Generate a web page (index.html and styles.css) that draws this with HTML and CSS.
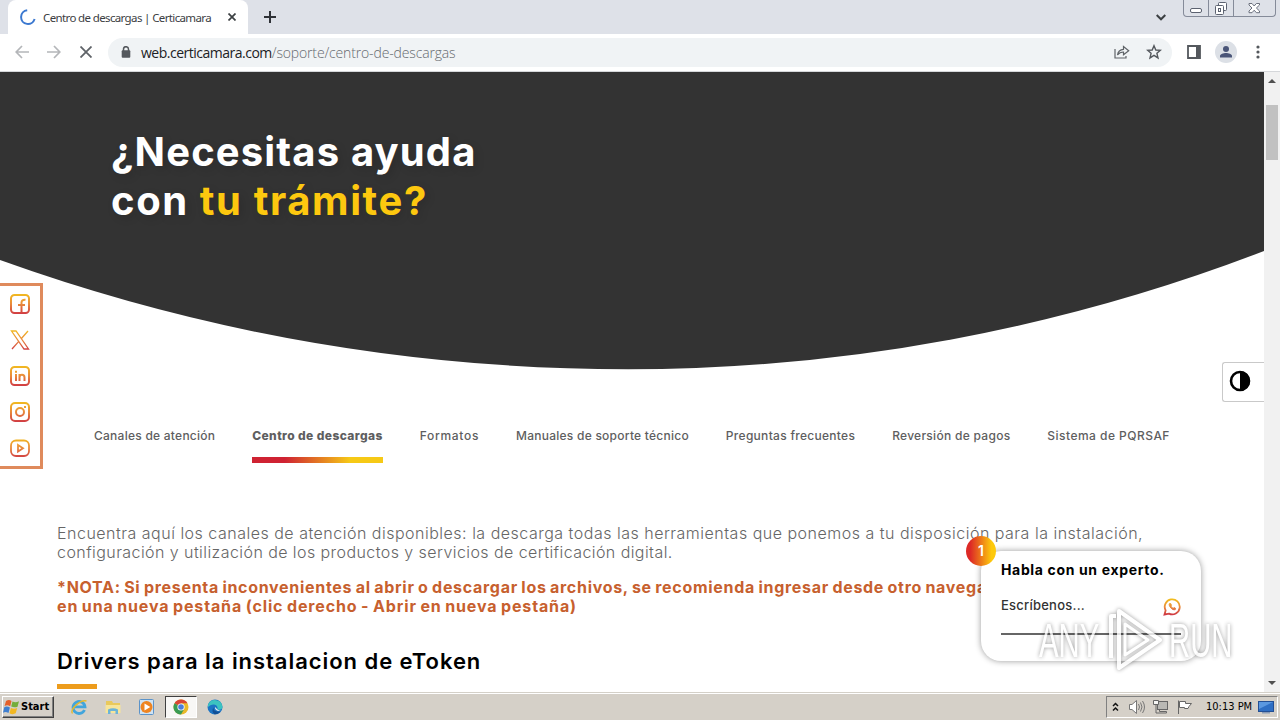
FILE: index.html
```html
<!DOCTYPE html>
<html lang="es">

<head>
    <meta charset="utf-8">
    <title>Centro de descargas | Certicamara</title>
    <link rel="stylesheet" href="styles.css">
</head>

<body>
    <svg class="defs" width="0" height="0">
        <defs>
            <linearGradient id="warm" x1="0" y1="0" x2="0" y2="24" gradientUnits="userSpaceOnUse">
                <stop offset="0" stop-color="#f3c41a" />
                <stop offset="0.5" stop-color="#e98a3c" />
                <stop offset="1" stop-color="#cb2b45" />
            </linearGradient>
        </defs>
    </svg>

    <header class="tabstrip">
        <div class="tab">
            <svg class="spinner" width="16" height="16" viewBox="0 0 16 16" fill="none" stroke="#3b78d0" stroke-width="2">
                <path d="M7.2 1.2A6.9 6.9 0 1 0 14.6 10" />
            </svg>
            <span class="tab-title">Centro de descargas | Certicamara</span>
            <svg class="tab-close" width="8" height="8" viewBox="0 0 8 8" stroke="#3c4043" stroke-width="1.7">
                <path d="M0.5 0.5L7.5 7.5M7.5 0.5L0.5 7.5" />
            </svg>
        </div>
        <svg class="new-tab" width="12" height="12" viewBox="0 0 12 12" stroke="#2f3237" stroke-width="2">
            <path d="M6 0V12M0 6H12" />
        </svg>
        <svg class="tab-search" width="10" height="7" viewBox="0 0 10 7" fill="none" stroke="#3c4043" stroke-width="2">
            <path d="M0.7 1L5 5.3L9.3 1" />
        </svg>
        <div class="win-buttons">
            <span>
                <svg width="13" height="17" viewBox="0 0 13 17" fill="#fff" stroke="#5c6270">
                    <rect x="0.5" y="8.5" width="11" height="4" rx="1.5" />
                </svg>
            </span>
            <span>
                <svg width="14" height="17" viewBox="0 0 14 17" fill="#fff" stroke="#5c6270">
                    <rect x="4.5" y="2.5" width="8" height="8" rx="1" />
                    <rect x="1.5" y="5.5" width="8" height="9" rx="1" />
                    <rect x="4.5" y="8.5" width="2" height="3" />
                </svg>
            </span>
            <span>
                <svg width="13" height="17" viewBox="0 0 13 17" fill="#fff" stroke="#5c6270" stroke-width="0.9">
                    <path d="M1 3.5H4L6.2 6L8.4 3.5H11.5V5L8.4 8L11.5 11V12.7H8.4L6.2 10.2L4 12.7H1V11L4 8L1 5Z" />
                </svg>
            </span>
        </div>
    </header>

    <div class="toolbar">
        <svg class="nav-icon" width="14" height="14" viewBox="0 0 14 14" fill="none" stroke="#b4b6b9" stroke-width="1.7">
            <path d="M14 7H1.5M7 1L1.2 7L7 13" />
        </svg>
        <svg class="nav-icon" width="14" height="14" viewBox="0 0 14 14" fill="none" stroke="#b4b6b9" stroke-width="1.7">
            <path d="M0 7H12.5M7 1L12.8 7L7 13" />
        </svg>
        <svg class="nav-icon stop" width="12" height="12" viewBox="0 0 12 12" stroke="#5f6368" stroke-width="1.8">
            <path d="M0.5 0.5L11.5 11.5M11.5 0.5L0.5 11.5" />
        </svg>
        <div class="omnibox">
            <svg class="lock" width="10" height="12" viewBox="0 0 10 12">
                <path d="M2.5 5V3.2A2.5 2.5 0 0 1 7.5 3.2V5" fill="none" stroke="#54585d" stroke-width="1.5" />
                <rect x="0.7" y="4.3" width="8.6" height="7.5" rx="1" fill="#54585d" />
            </svg>
            <span class="url"><b>web.certicamara.com</b>/soporte/centro-de-descargas</span>
            <svg class="share" width="16" height="14" viewBox="0 0 16 14" fill="none" stroke="#5f6368" stroke-width="1.2">
                <path d="M1 4V13H12V11M3.5 10C4 6.5 6 4.5 9.5 4.3V1.5L14.7 5.7L9.5 9.8V7C7 7 5 8 3.5 10Z" />
            </svg>
            <svg class="star" width="16" height="16" viewBox="0 0 16 16" fill="none" stroke="#54585d" stroke-width="1.4">
                <path d="M8 1.7L9.8 6L14.4 6.3L10.9 9.3L12 13.9L8 11.4L4 13.9L5.1 9.3L1.6 6.3L6.2 6Z" />
            </svg>
        </div>
        <svg class="panel" width="14" height="14" viewBox="0 0 14 14">
            <path d="M1 1H13V13H1Z" fill="none" stroke="#54585d" stroke-width="1.8" />
            <rect x="9" y="1" width="4" height="12" fill="#54585d" />
        </svg>
        <div class="avatar">
            <svg width="14" height="14" viewBox="0 0 14 14" fill="#4a5578">
                <circle cx="7" cy="4" r="3" />
                <path d="M1 12.5V11C1 9 4.5 8 7 8S13 9 13 11V12.5Z" />
            </svg>
        </div>
        <svg class="kebab" width="4" height="14" viewBox="0 0 4 14" fill="#54585d">
            <circle cx="2" cy="2" r="1.6" />
            <circle cx="2" cy="7" r="1.6" />
            <circle cx="2" cy="12" r="1.6" />
        </svg>
    </div>

    <div class="viewport">
        <main class="page">
            <section class="hero">
                <svg class="hero-bg" width="1264" height="298" viewBox="0 0 1264 298">
                    <path d="M0 0H1264V179A1773 1773 0 0 1 628 297.3A1859 1859 0 0 1 0 188Z" fill="#333" />
                </svg>
                <h1>
                    <span class="t1">¿Necesitas ayuda</span><br>
                    <span class="t2">con <em>tu trámite?</em></span>
                </h1>
            </section>

            <nav class="sections">
                <a class="n1">Canales de atención</a>
                <a class="n2 current">Centro de descargas</a>
                <a class="n3">Formatos</a>
                <a class="n4">Manuales de soporte técnico</a>
                <a class="n5">Preguntas frecuentes</a>
                <a class="n6">Reversión de pagos</a>
                <a class="n7">Sistema de PQRSAF</a>
            </nav>

            <section class="content">
                <p class="lead">
                    <span class="l1">Encuentra aquí los canales de atención disponibles: la descarga todas las herramientas que ponemos a tu disposición para la instalación,</span><br>
                    <span class="l2">configuración y utilización de los productos y servicios de certificación digital.</span>
                </p>
                <p class="note">
                    <span class="o1">*NOTA: Si presenta inconvenientes al abrir o descargar los archivos, se recomienda ingresar desde otro navegador</span><br>
                    <span class="o2">en una nueva pestaña (clic derecho - Abrir en nueva pestaña)</span>
                </p>
                <h2>Drivers para la instalacion de eToken</h2>
            </section>

            <aside class="social">
                <svg width="24" height="24" viewBox="0 0 24 24" fill="none" stroke="url(#warm)" stroke-width="2">
                    <rect x="3" y="3" width="18" height="18" rx="3.5" />
                    <path d="M13.5 21V10.5Q13.5 7.5 17.5 7.8M10 13H17" />
                </svg>
                <svg width="24" height="24" viewBox="0 0 24 24" fill="none" stroke="url(#warm)" stroke-width="1.3">
                    <path d="M3.5 3H8L20.5 21H16ZM20 3L13.2 10.7M10.8 13.4L4 21" />
                </svg>
                <svg width="24" height="24" viewBox="0 0 24 24" fill="none" stroke="url(#warm)" stroke-width="2">
                    <rect x="3" y="3" width="18" height="18" rx="3.5" />
                    <path d="M8 10V17M8 6.8V8.8M11.5 17V10M11.5 13Q11.8 10.8 14 10.8Q16.5 10.8 16.5 13.5V17" />
                </svg>
                <svg width="24" height="24" viewBox="0 0 24 24" fill="none" stroke="url(#warm)" stroke-width="2">
                    <rect x="3" y="3" width="18" height="18" rx="4" />
                    <circle cx="12" cy="12" r="4" />
                    <path d="M16 7H18" />
                </svg>
                <svg width="24" height="24" viewBox="0 0 24 24" fill="none" stroke="url(#warm)" stroke-width="1.8">
                    <rect x="3" y="4.5" width="18" height="15.5" rx="5" />
                    <path d="M10 9L15 12.2L10 15.5Z" />
                </svg>
            </aside>

            <div class="contrast">
                <svg width="22" height="22" viewBox="0 0 22 22">
                    <circle cx="11" cy="11" r="9" fill="#fff" stroke="#000" stroke-width="2.6" />
                    <path d="M11 1A10 10 0 0 1 11 21Z" />
                </svg>
            </div>

            <div class="chat">
                <span class="badge">1</span>
                <strong>Habla con un experto.</strong>
                <div class="chat-input">
                    <span>Escríbenos...</span>
                    <svg width="18" height="18" viewBox="0 0 24 24" fill="none" stroke="url(#warm)" stroke-width="2.4">
                        <path d="M2 22L3.5 16.5A10 10 0 1 1 8 20.8Z" />
                        <path d="M8.5 7.5C7 10.5 12.5 17 16.3 15.5L16.8 13.8L14.6 12.7L13.5 13.8C12 13.2 11 12 10.5 10.7L11.3 9.6L10.2 7.3Z" stroke-width="1.3" fill="url(#warm)" />
                    </svg>
                </div>
            </div>

            <div class="watermark">
                <span>ANY</span>
                <svg width="56" height="64" viewBox="0 0 56 64" fill="none" stroke="#fff" stroke-linejoin="round">
                    <path d="M3 50V8H8" stroke-width="4" />
                    <path d="M11 3L52 32L11 60Z" stroke-width="4" />
                    <path d="M17 16L40 32L17 47Z" stroke-width="3" />
                </svg>
                <span>RUN</span>
            </div>
        </main>

        <div class="scrollbar">
            <i class="arrow up"></i>
            <i class="thumb"></i>
            <i class="arrow down"></i>
        </div>
    </div>

    <footer class="taskbar">
        <div class="start">
            <svg width="17" height="16" viewBox="0 0 17 16">
                <path d="M3 2Q6 0 8.5 2L7.2 7.3Q4.5 5.5 1.6 7Z" fill="#e5602a" />
                <path d="M9.5 2.5Q12.5 4 16 2.3L14.5 7.8Q11.5 9 8.2 7.6Z" fill="#74ad3c" />
                <path d="M1.3 8.2Q4 6.8 6.9 8.6L5.5 14Q2.7 12.2 0 13.7Z" fill="#3f7fd0" />
                <path d="M7.9 9Q11 10.3 14.2 9L12.7 14.3Q9.5 16 6.5 14.2Z" fill="#f2b822" />
            </svg>
            <span>Start</span>
        </div>
        <div class="launch">
            <svg width="18" height="18" viewBox="0 0 18 18" fill="none">
                <path d="M14.5 12A6 6 0 1 1 15 8.8H4" stroke="#42a5dc" stroke-width="2.8" />
                <path d="M2.5 15.5C-1 12 10 1.5 16.5 3" stroke="#e5b92d" stroke-width="1.4" />
            </svg>
        </div>
        <div class="launch">
            <svg width="18" height="18" viewBox="0 0 18 18">
                <path d="M2 3H8L9 5H16V15H2Z" fill="#e9c95c" />
                <path d="M1.5 7H16.5V15H1.5Z" fill="#f7e59a" />
                <path d="M4 16V11.5Q9 9 14 11.5V16H11.5V13H6.5V16Z" fill="#6cb4d8" />
            </svg>
        </div>
        <div class="launch">
            <svg width="18" height="18" viewBox="0 0 18 18">
                <rect x="1.5" y="1.5" width="14" height="15" rx="1" fill="#cfe3f3" stroke="#5b93c9" />
                <circle cx="8.5" cy="9" r="6" fill="#ee8420" />
                <path d="M6.5 5.5L12.3 9L6.5 12.5Z" fill="#fff" />
            </svg>
        </div>
        <div class="launch active">
            <svg width="16" height="16" viewBox="0 0 16 16">
                <circle cx="8" cy="8" r="7.5" fill="#e9b92a" />
                <path d="M8 8L1.5 4.25A7.5 7.5 0 0 1 14.5 4.25H8Z" fill="#d94535" />
                <path d="M1.5 4.25A7.5 7.5 0 0 0 8 15.5L11.2 10Z" fill="#3a9b53" />
                <circle cx="8" cy="8" r="3.6" fill="#fff" />
                <circle cx="8" cy="8" r="2.8" fill="#4a7ddb" />
            </svg>
        </div>
        <div class="launch">
            <svg width="16" height="16" viewBox="0 0 16 16">
                <circle cx="8" cy="8" r="7.5" fill="#1c74c4" />
                <path d="M1 6A7.5 7.5 0 0 1 15.5 8Q15 11.5 10.5 10.5Q11 6 7 5.5Q3.5 5 1 8Z" fill="#3cc3c0" />
                <path d="M6.5 8.5Q6 13 13.5 12.8Q10.5 15.5 7.5 15.3Q4 12.5 6.5 8.5Z" fill="#124f95" />
                <path d="M8 8Q7.5 10.5 11 12L14.8 11Q11.5 11.8 10 10Z" fill="#e6eef2" />
            </svg>
        </div>
        <div class="tray">
            <svg class="chevrons" width="7" height="10" viewBox="0 0 7 10" fill="none" stroke="#111" stroke-width="1.5">
                <path d="M1 4L3.5 1.5L6 4M1 8.5L3.5 6L6 8.5" />
            </svg>
            <svg width="18" height="16" viewBox="0 0 18 16" fill="#fff" stroke="#777" stroke-width="1">
                <path d="M1.5 5.5H4L8.5 1.5V14.5L4 10.5H1.5Z" />
                <path d="M10.5 5Q12.5 8 10.5 11M12.5 3.5Q15.5 8 12.5 12.5M14.5 2Q18.5 8 14.5 14" fill="none" />
            </svg>
            <svg width="18" height="16" viewBox="0 0 18 16" fill="#f6f6f4" stroke="#666">
                <rect x="5.5" y="2.5" width="10" height="8" fill="#b9b8b4" />
                <path d="M1.5 1.5V5.5H6.5V1.5Z" />
                <path d="M4 5.5V14H14.500V12.500H7.500V10.500" fill="none" />
            </svg>
            <svg width="18" height="16" viewBox="0 0 18 16" fill="#fff" stroke="#666">
                <path d="M2.5 1.5V15M3.5 2.5H9.5V4.5H15.5L13 7.5L12 9.5H8.5V8.5H3.5Z" />
            </svg>
            <span class="clock">10:13 PM</span>
            <svg width="16" height="14" viewBox="0 0 16 14">
                <rect x="0.5" y="1.5" width="15" height="10" fill="#2f6fc4" stroke="#234f94" />
                <path d="M1 2H15L1 9Z" fill="#5b98e0" />
                <rect x="4" y="12" width="8" height="1.5" fill="#8a9bb5" />
            </svg>
        </div>
    </footer>
</body>

</html>
```
FILE: styles.css
```css
* {
    padding: 0;
    margin: 0;
    box-sizing: border-box;
}

body {
    width: 1280px;
    height: 720px;
    overflow: hidden;
    display: flex;
    flex-direction: column;
    background: #fff;
    font-family: Inter, 'Liberation Sans', sans-serif;
}

svg {
    display: block;
    flex-shrink: 0;
}

.defs {
    position: absolute;
}

/* browser */
.tabstrip {
    height: 34px;
    flex-shrink: 0;
    display: flex;
    align-items: center;
    padding-left: 8px;
    background: #dee1e8;
}

.tab {
    width: 240px;
    height: 34px;
    display: flex;
    align-items: center;
    padding: 0 12px;
    background: #fff;
    border-radius: 8px 8px 0 0;
}

.tab-title {
    width: 173px;
    margin-left: 7px;
    font: 11.5px 'Noto Sans', sans-serif;
    letter-spacing: -0.63px;
    color: #3c4043;
    white-space: nowrap;
}

.tab-close {
    margin-left: 12px;
}

.new-tab {
    margin-left: 16px;
}

.tab-search {
    margin-left: auto;
}

.win-buttons {
    width: 93px;
    height: 17px;
    display: flex;
    align-self: flex-start;
    margin: 0 4px 0 17px;
    border: 1px solid #858b99;
    border-top: 0;
    border-radius: 0 0 4px 4px;
}

.win-buttons span {
    width: 25px;
    display: flex;
    justify-content: center;
    border-right: 1px solid #858b99;
}

.win-buttons span:last-child {
    flex: 1;
    border: 0;
}

.toolbar {
    height: 38px;
    flex-shrink: 0;
    display: flex;
    align-items: center;
    padding: 0 19px 1px 15px;
    border-bottom: 1px solid #d5d7da;
    background: #fff;
}

.nav-icon {
    margin-right: 18px;
}

.nav-icon.stop {
    margin: 0 16px 0 1px;
}

.omnibox {
    width: 1064px;
    height: 29px;
    display: flex;
    align-items: center;
    padding: 0 10px 0 13px;
    border-radius: 15px;
    background: #f0f3f5;
}

.url {
    margin-left: 10px;
    font: 300 14px 'Open Sans', sans-serif;
    letter-spacing: -0.15px;
    color: #666a6f;
    white-space: nowrap;
}

.url b {
    font-weight: 400;
    letter-spacing: -0.5px;
    color: #202124;
}

.share {
    margin-left: auto;
}

.star {
    margin-left: 16px;
}

.panel {
    margin-left: 15px;
}

.avatar {
    width: 22px;
    height: 22px;
    display: flex;
    align-items: center;
    justify-content: center;
    margin: 0 19px 0 14px;
    border-radius: 50%;
    background: #dce0e6;
}

.viewport {
    height: 620px;
    display: flex;
}

.page {
    position: relative;
    width: 1264px;
    overflow: hidden;
    background: #fff;
}

/* hero */
.hero {
    position: relative;
    height: 298px;
}

.hero-bg {
    position: absolute;
    top: 0;
    left: 0;
}

h1 {
    position: relative;
    padding: 55px 0 0 111px;
    font-size: 40px;
    font-weight: 700;
    line-height: 49px;
    color: #fff;
    white-space: nowrap;
    text-shadow: 3px 3px 8px rgba(0, 0, 0, 0.15);
}

h1 em {
    font-style: normal;
    color: #fdc80f;
}

.t1 {
    letter-spacing: 1.15px;
}

.t2 {
    letter-spacing: 1.6px;
}

.sections {
    display: flex;
    justify-content: space-between;
    margin: 56px 94px 0 94px;
    height: 37px;
    font-size: 12px;
    font-weight: 500;
    line-height: 20px;
    color: #5e5e60;
    white-space: nowrap;
}

.sections .current {
    font-weight: 800;
    background: linear-gradient(to right, #cf2232 25%, #f6c916 75%) no-repeat 0 31px / 100% 6px;
}

.n1, .n4 {
    letter-spacing: 0.25px;
}

.n2 {
    letter-spacing: 0.4px;
}

.n3 {
    letter-spacing: 0.7px;
}

.n5, .n6 {
    letter-spacing: 0.29px;
}

.n7 {
    letter-spacing: 0.47px;
}

.content {
    padding: 61px 57px 0;
    white-space: nowrap;
}

.lead {
    font-size: 16px;
    font-weight: 300;
    line-height: 19px;
    color: #666;
}

.l1 {
    letter-spacing: 0.5px;
}

.l2 {
    letter-spacing: 0.43px;
}

.note {
    margin-top: 16px;
    font-size: 16px;
    font-weight: 700;
    line-height: 19px;
    word-spacing: -1px;
    color: #c7602e;
}

.o1 {
    letter-spacing: 0.7px;
}

.o2 {
    letter-spacing: 0.85px;
}

h2 {
    height: 45px;
    margin-top: 31px;
    font-size: 22px;
    font-weight: 600;
    line-height: 28px;
    letter-spacing: 0.95px;
    color: #000;
    background: linear-gradient(#ed9c1c, #ed9c1c) no-repeat 0 37px / 40px 5px;
}

/* floating widgets */
.social {
    position: absolute;
    top: 211px;
    left: 0;
    width: 43px;
    height: 186px;
    display: flex;
    flex-direction: column;
    gap: 12px;
    padding: 6px 0 0 8px;
    border: 3px solid #df8a5c;
    border-left: 0;
    background: #fff;
}

.contrast {
    position: absolute;
    top: 290px;
    right: 0;
    width: 42px;
    height: 40px;
    padding: 7px 6px;
    border: 1px solid #c9c9c9;
    border-right: 0;
    border-radius: 3px 0 0 3px;
    background: #fff;
}

.chat {
    position: absolute;
    top: 479px;
    left: 981px;
    width: 220px;
    height: 110px;
    padding: 9px 20px;
    border-radius: 20px;
    background: #fff;
    box-shadow: 0 0 6px rgba(0, 0, 0, 0.4);
}

.chat strong {
    display: block;
    font-size: 14px;
    font-weight: 700;
    line-height: 20px;
    letter-spacing: 0.65px;
    white-space: nowrap;
}

.chat-input {
    height: 40px;
    display: flex;
    justify-content: space-between;
    margin-top: 15px;
    border-bottom: 2px solid #666;
    font-size: 13px;
    font-weight: 500;
    line-height: 20px;
    letter-spacing: 0.23px;
    color: #333;
}

.chat-input svg {
    margin-top: 3px;
}

.badge {
    position: absolute;
    top: -15px;
    left: -15px;
    width: 30px;
    height: 30px;
    border-radius: 50%;
    background: linear-gradient(to right, #dd2a26 15%, #fdc90c 85%);
    color: #fff;
    font-size: 14px;
    font-weight: 600;
    line-height: 30px;
    text-align: center;
}

.watermark {
    position: absolute;
    top: 536px;
    left: 1039px;
    height: 64px;
    display: flex;
    align-items: center;
    gap: 5px;
    font: 48px 'Liberation Sans', sans-serif;
    color: #fff;
    opacity: 0.8;
    filter: drop-shadow(0 0 2px rgba(0, 0, 0, 0.5));
}

.watermark span {
    width: 64px;
    transform: scaleX(0.61);
    transform-origin: 0 50%;
}

.scrollbar {
    width: 16px;
    display: flex;
    flex-direction: column;
    align-items: center;
    padding: 7px 0;
    background: #f1f1f1;
}

.arrow {
    border: 4px solid transparent;
}

.up {
    border-top: 0;
    border-bottom-color: #505050;
}

.down {
    margin-top: auto;
    border-bottom: 0;
    border-top-color: #505050;
}

.thumb {
    width: 12px;
    height: 55px;
    margin-top: 22px;
    background: #c1c1c1;
}

/* taskbar */
.taskbar {
    height: 28px;
    flex-shrink: 0;
    display: flex;
    align-items: center;
    padding: 0 0 0 2px;
    border-top: 1px solid #d4d0c8;
    background: #d5d0c8;
    box-shadow: inset 0 1px #fff;
    font: 11px 'DejaVu Sans Condensed', 'DejaVu Sans', sans-serif;
    color: #000;
}

.start {
    width: 52px;
    height: 22px;
    display: flex;
    align-items: center;
    gap: 1px;
    margin-right: 9px;
    border: 1px solid;
    border-color: #fff #404040 #404040 #fff;
    box-shadow: inset -1px -1px #808080;
    font-weight: 700;
}

.launch {
    width: 32px;
    height: 22px;
    display: flex;
    align-items: center;
    justify-content: center;
    margin-right: 2px;
}

.launch.active {
    border: 1px solid;
    border-color: #404040 #fff #fff #404040;
    background: #f8f7f5;
}

.tray {
    width: 172px;
    height: 22px;
    display: flex;
    align-items: center;
    gap: 6px;
    margin: 0 2px 0 auto;
    padding-left: 5px;
    border: 1px solid;
    border-color: #808080 #fff #fff #808080;
}

.chevrons {
    margin-right: 3px;
}

.clock {
    margin-left: 6px;
    white-space: nowrap;
}
```
